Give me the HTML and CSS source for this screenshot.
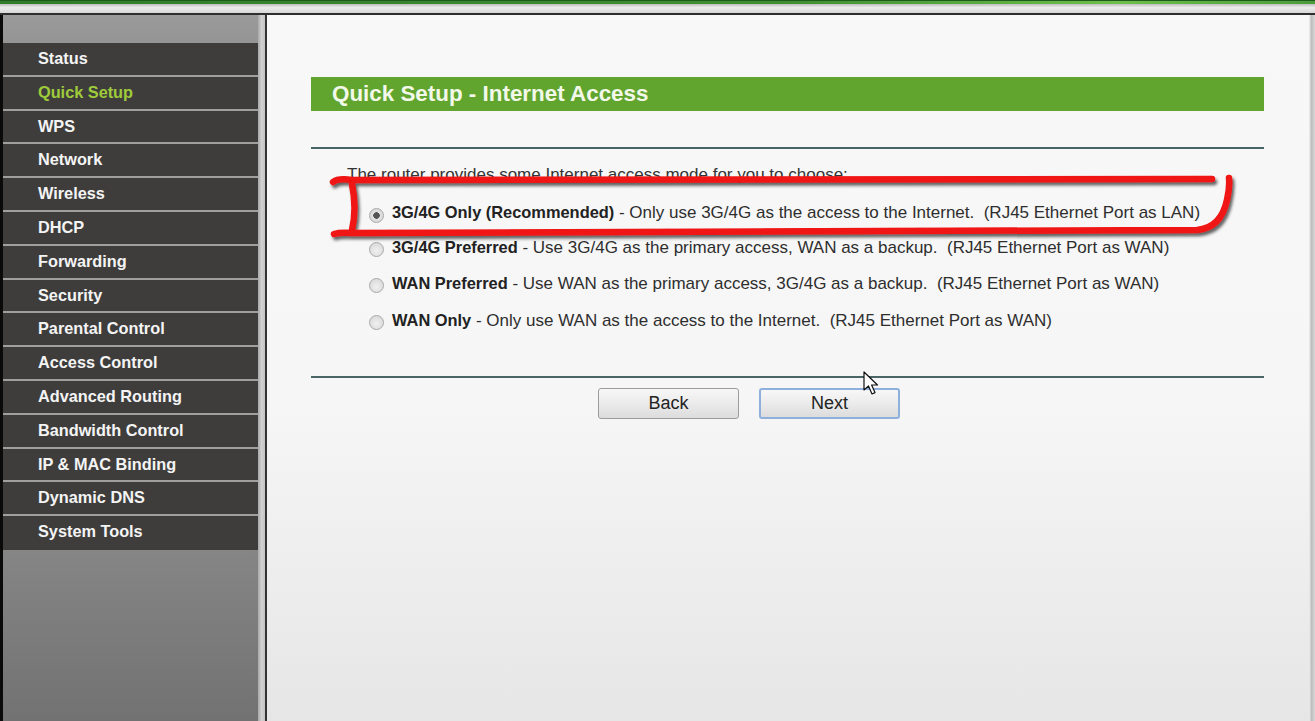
FILE: index.html
```html
<!DOCTYPE html>
<html lang="en">

<head>
    <meta charset="UTF-8">
    <meta name="viewport" content="width=device-width, initial-scale=1.0">
    <title>Quick Setup - Internet Access</title>
    <link rel="stylesheet" href="styles.css">
</head>

<body>
    <div class="page">
        <div class="topbar">
            <div class="top-green"></div>
            <div class="top-band"></div>
            <div class="top-line"></div>
        </div>

        <div class="main">
            <div class="edge-left"></div>

            <!-- 左侧菜单 -->
            <div class="sidebar">
                <ul class="menu">
                    <li class="menu-item">Status</li>
                    <li class="menu-item active">Quick Setup</li>
                    <li class="menu-item">WPS</li>
                    <li class="menu-item">Network</li>
                    <li class="menu-item">Wireless</li>
                    <li class="menu-item">DHCP</li>
                    <li class="menu-item">Forwarding</li>
                    <li class="menu-item">Security</li>
                    <li class="menu-item">Parental Control</li>
                    <li class="menu-item">Access Control</li>
                    <li class="menu-item">Advanced Routing</li>
                    <li class="menu-item">Bandwidth Control</li>
                    <li class="menu-item">IP &amp; MAC Binding</li>
                    <li class="menu-item">Dynamic DNS</li>
                    <li class="menu-item">System Tools</li>
                </ul>
            </div>
            <div class="divider"></div>

            <!-- 右侧内容 -->
            <div class="content">
                <div class="panel">
                    <div class="title-bar">Quick Setup - Internet Access</div>
                    <div class="rule rule-top"></div>
                    <p class="intro">The router provides some Internet access mode for you to choose:</p>
                    <div class="options">
                        <label class="option">
                            <input type="radio" name="mode" checked>
                            <span><b>3G/4G Only (Recommended)</b> - Only use 3G/4G as the access to the Internet.&nbsp; (RJ45 Ethernet Port as LAN)</span>
                        </label>
                        <label class="option">
                            <input type="radio" name="mode">
                            <span><b>3G/4G Preferred</b> - Use 3G/4G as the primary access, WAN as a backup.&nbsp; (RJ45 Ethernet Port as WAN)</span>
                        </label>
                        <label class="option">
                            <input type="radio" name="mode">
                            <span><b>WAN Preferred</b> - Use WAN as the primary access, 3G/4G as a backup.&nbsp; (RJ45 Ethernet Port as WAN)</span>
                        </label>
                        <label class="option">
                            <input type="radio" name="mode">
                            <span><b>WAN Only</b> - Only use WAN as the access to the Internet.&nbsp; (RJ45 Ethernet Port as WAN)</span>
                        </label>
                    </div>
                    <div class="rule rule-bottom"></div>
                    <div class="buttons">
                        <button class="btn">Back</button>
                        <button class="btn btn-focus">Next</button>
                    </div>
                </div>
            </div>
            <div class="edge-right"></div>
        </div>

        <!-- 红色标注 -->
        <svg class="markup" width="1315" height="721" viewBox="0 0 1315 721">
            <defs>
                <filter id="shade" x="-5%" y="-50%" width="110%" height="200%">
                    <feDropShadow dx="2" dy="3" stdDeviation="1.5" flood-color="#222" flood-opacity="0.7" />
                </filter>
            </defs>
            <g fill="none" stroke="#f01212" stroke-width="6.5" stroke-linecap="round" filter="url(#shade)">
                <path d="M333 182 Q338 178 352 180 L1212 179" />
                <path d="M352 184 Q357 208 352 230" />
                <path d="M334 234 Q340 232 352 233 L1197 230 Q1221 228 1227 200 Q1230 187 1229 178" />
            </g>
        </svg>

        <!-- 鼠标指针 -->
        <svg class="cursor" width="20" height="28" viewBox="0 0 20 28">
            <path d="M1 1 L1 19 L5.5 15 L9 23 L12 21.6 L8.6 14 L14.5 14 Z" fill="#fff" stroke="#111" stroke-width="1.2" stroke-linejoin="round" />
        </svg>
    </div>
</body>

</html>
```

FILE: styles.css
```css
* {
    padding: 0;
    margin: 0;
    box-sizing: border-box;
}

body {
    font-family: "Liberation Sans", Arial, sans-serif;
    background-color: #e6e6e6;
    width: 1315px;
    height: 721px;
    overflow: hidden;
}

.page {
    position: relative;
    width: 1315px;
    height: 721px;
    display: flex;
    flex-direction: column;
}

/* 顶部条 */
.topbar {
    height: 15px;
    display: flex;
    flex-direction: column;
}

.top-green {
    height: 4px;
    background: linear-gradient(to right, #2f7d2a, #3f8f32 60%, #6cbf4c 85%, #4a9c3a);
    border-top: 1px solid #1f5a1c;
}

.top-band {
    height: 9px;
    background: linear-gradient(#bdbdbd, #ececec 40%, #d6d6d6);
}

.top-line {
    height: 2px;
    background-color: #2e2e2e;
}

.main {
    flex: 1;
    display: flex;
}

.edge-left {
    width: 3px;
    background-color: #0a0a0a;
}

/* 菜单 */
.sidebar {
    width: 255px;
    padding-top: 28px;
    background: linear-gradient(#9a9a9a, #8c8c8c 10%, #868686 75%, #727272);
}

.menu {
    list-style: none;
}

.menu-item {
    height: 33.8px;
    line-height: 31px;
    padding-left: 35px;
    background-color: #3e3d3c;
    border-bottom: 2.3px solid #9f9f9f;
    color: #f4f4f4;
    font-size: 16.3px;
    font-weight: bold;
}

.menu-item:last-child {
    border-bottom: 0;
}

.menu-item.active {
    color: #9fcb3a;
}

.divider {
    width: 9px;
    background: linear-gradient(to right, #a8a8a8, #d2d2d2 40%, #c4c4c4 75%, #333 78%, #333 95%, #bbb);
}

/* 内容 */
.content {
    flex: 1;
    padding: 62px 0 0 44px;
    background: linear-gradient(#f8f8f8, #f6f6f6 55%, #e6e6e6);
}

.panel {
    width: 953px;
}

.title-bar {
    height: 34px;
    line-height: 33px;
    padding-left: 21px;
    background-color: #62a52e;
    color: #f2f8ea;
    font-size: 22.4px;
    font-weight: bold;
}

.rule {
    height: 2px;
    background-color: #4a6565;
}

.rule-top {
    margin-top: 36px;
}

.intro {
    margin: 16px 0 0 36px;
    font-size: 17px;
    line-height: 20px;
    color: #333;
}

.options {
    margin-top: 11px;
    padding-left: 58px;
}

.option {
    display: flex;
    align-items: center;
    gap: 8px;
    height: 37px;
    font-size: 17px;
    color: #2e2e2e;
}

.option:first-child {
    height: 34px;
}

.option:nth-child(2) {
    height: 35px;
}

.option b {
    color: #222;
    font-size: 16.4px;
}

.option input {
    appearance: none;
    flex-shrink: 0;
    width: 15px;
    height: 15px;
    border-radius: 50%;
    border: 1px solid #a9a9a9;
    background: radial-gradient(circle at 50% 60%, #f0f0f0, #d4d4d4);
    position: relative;
    top: 2px;
}

.option input:checked {
    background: radial-gradient(circle, #555 0 3px, #e4e4e4 3.5px, #cfcfcf);
}

.rule-bottom {
    margin-top: 37px;
}

.buttons {
    display: flex;
    gap: 20px;
    margin: 10px 0 0 287px;
}

.btn {
    width: 141px;
    height: 31px;
    font-family: "Liberation Sans", Arial, sans-serif;
    font-size: 18px;
    color: #222;
    background: linear-gradient(#f7f7f7, #ebebeb 50%, #dcdcdc);
    border: 1px solid #9c9c9c;
    border-radius: 3px;
}

.btn-focus {
    border: 2px solid #8fb0dc;
}

.edge-right {
    width: 6px;
    background: linear-gradient(to right, #f2f2f2, #bdbdbd 40%, #d8d8d8);
}

/* 标注与指针 */
.markup {
    position: absolute;
    left: 0;
    top: 0;
    pointer-events: none;
}

.cursor {
    position: absolute;
    left: 863px;
    top: 371px;
}
```
